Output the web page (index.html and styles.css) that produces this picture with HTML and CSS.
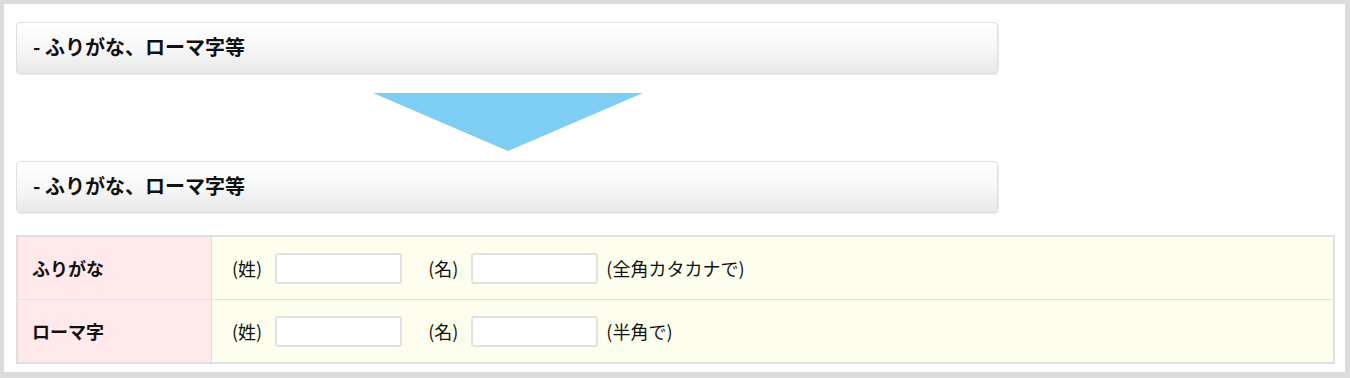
FILE: index.html
```html
<!DOCTYPE html>
<html lang="ja">
<head>
    <meta charset="UTF-8">
    <meta name="viewport" content="width=device-width, initial-scale=1.0">
    <title>ふりがな、ローマ字等</title>
    <link rel="stylesheet" href="styles.css">
</head>
<body>

<div class="frame">
    <!-- Before -->
    <div class="section-title">- ふりがな、ローマ字等</div>

    <div class="arrow"></div>

    <!-- After -->
    <div class="section-title">- ふりがな、ローマ字等</div>

    <table class="form-table">
        <tr>
            <th>ふりがな</th>
            <td>
                <div class="field-row">
                    <span class="field-label">(姓)</span>
                    <input type="text" class="name-input">
                    <span class="field-label second">(名)</span>
                    <input type="text" class="name-input">
                    <span class="note">(全角カタカナで)</span>
                </div>
            </td>
        </tr>
        <tr>
            <th>ローマ字</th>
            <td>
                <div class="field-row">
                    <span class="field-label">(姓)</span>
                    <input type="text" class="name-input">
                    <span class="field-label second">(名)</span>
                    <input type="text" class="name-input">
                    <span class="note">(半角で)</span>
                </div>
            </td>
        </tr>
    </table>
</div>

</body>
</html>
```

FILE: styles.css
```css
html, body {
    height: 378px;
}

body {
    margin: 0;
    padding: 4px 5px 6px 4px;
    box-sizing: border-box;
    background: #dcdcdc;
    font-family: "Noto Sans CJK JP", "Noto Sans", sans-serif;
    color: #111;
}

.frame {
    height: 100%;
    background: #fff;
    padding: 18px 10px 0 12px;
    box-sizing: border-box;
}

.section-title {
    width: 982px;
    height: 52px;
    box-sizing: border-box;
    display: flex;
    align-items: center;
    padding: 0 0 3px 16px;
    border: 1px solid #dedede;
    border-radius: 4px;
    background: linear-gradient(to bottom, #ffffff 0%, #f7f7f7 50%, #e9e9e9 100%);
    box-shadow: 1px 1px 1px rgba(0, 0, 0, 0.08);
    font-size: 20px;
    font-weight: bold;
    color: #111;
}

.arrow {
    width: 0;
    height: 0;
    margin: 19px 0 10px 357px;
    border-left: 135px solid transparent;
    border-right: 135px solid transparent;
    border-top: 58px solid #7dcdf4;
}

.form-table {
    width: 1319px;
    margin-top: 22px;
    border-collapse: collapse;
    border: 2px solid #e0e0e0;
    font-size: 18px;
}

.form-table th,
.form-table td {
    height: 62px;
    padding: 0;
    border: 1px solid #e0e0e0;
}

.form-table th {
    width: 179px;
    padding-left: 14px;
    text-align: left;
    background: #ffe9ea;
    color: #111;
}

.form-table td {
    background: #fefeee;
    padding-left: 20px;
}

.field-row {
    display: flex;
    align-items: center;
}

.field-label {
    margin-right: 13px;
}

.field-label.second {
    margin-left: 26px;
}

.name-input {
    width: 127px;
    height: 31px;
    box-sizing: border-box;
    border: 2px solid #e2e2e2;
    border-radius: 3px;
    background: #fff;
}

.note {
    margin-left: 8px;
}
```
